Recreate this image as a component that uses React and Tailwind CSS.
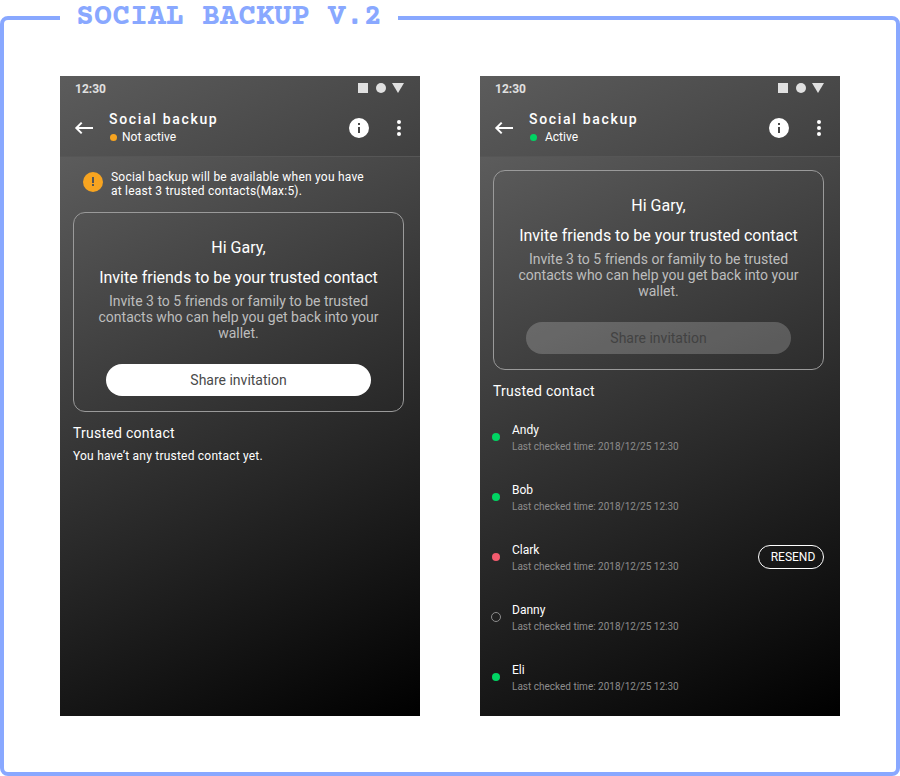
const TONES = {
  green: "bg-[#00d563]",
  red: "bg-[#f35b6e]",
  orange: "bg-[#f7a420]",
  none: "border border-[#8c8c8c]",
};

const CONTACTS = [
  { name: "Andy", tone: "green" },
  { name: "Bob", tone: "green" },
  { name: "Clark", tone: "red", resend: true },
  { name: "Danny", tone: "none" },
  { name: "Eli", tone: "green" },
];

function StatusBar() {
  return (
    <div className="flex h-6 items-center justify-between pr-4 pl-[15px] text-[#e0e0e0]">
      <span className="pt-0.5 text-xs font-bold">12:30</span>
      <svg width="46" height="10" viewBox="0 0 46 10" fill="currentColor" aria-hidden="true">
        <path d="M0 0h10v10H0z" />
        <circle cx="23" cy="5" r="5" />
        <path d="M34 0h12l-6 10z" />
      </svg>
    </div>
  );
}

function Header({ status, tone, gap }) {
  return (
    <header className="border-b border-[#565656] bg-[linear-gradient(155deg,#5c5c5c,#404040)]">
      <StatusBar />
      <div className="flex h-14 items-center pr-3 pl-3">
        <button type="button" aria-label="Back" className="flex size-6 items-center justify-center">
          <svg width="24" height="24" viewBox="0 0 24 24" fill="none" stroke="currentColor" strokeWidth="2" aria-hidden="true">
            <path d="M21 12H4.5M9.7 6.6 4.3 12l5.4 5.4" />
          </svg>
        </button>
        <div className="ml-[13px] flex-1">
          <h2 className="text-sm leading-[18px] font-medium tracking-[0.12em]">Social backup</h2>
          <p className={`flex items-center text-xs leading-[18px] ${gap}`}>
            <span className={`ml-px size-[7px] rounded-full ${TONES[tone]}`} />
            {status}
          </p>
        </div>
        <button type="button" aria-label="Information" className="mr-[19px] flex size-6 items-center justify-center">
          <svg width="24" height="24" viewBox="0 0 24 24" aria-hidden="true">
            <path
              fill="currentColor"
              fillRule="evenodd"
              d="M12 2a10 10 0 1 0 0 20 10 10 0 0 0 0-20zm1 15h-2v-6h2v6zm0-8h-2V7h2v2z"
            />
          </svg>
        </button>
        <button type="button" aria-label="More options" className="flex w-[18px] justify-center">
          <svg width="4" height="16" viewBox="0 0 4 16" fill="currentColor" aria-hidden="true">
            <circle cx="2" cy="2" r="2" />
            <circle cx="2" cy="8" r="2" />
            <circle cx="2" cy="14" r="2" />
          </svg>
        </button>
      </div>
    </header>
  );
}

function InviteCard({ disabled }) {
  return (
    <section className="rounded-xl border border-[#9a9a9a] px-5 pt-[23px] pb-[15px] text-center">
      <p className="leading-6">Hi Gary,</p>
      <h3 className="mt-1.5 leading-6">Invite friends to be your trusted contact</h3>
      <p className="mt-[3px] text-sm leading-4 text-[#bdbdbd]">
        Invite 3 to 5 friends or family to be trusted contacts who can help you get back into your wallet.
      </p>
      <div className="mt-[23px] px-3">
        <button
          type="button"
          disabled={disabled}
          className="h-8 w-full rounded-full bg-white text-sm text-[#4a4a4a] disabled:bg-white/20 disabled:text-[#424242]"
        >
          Share invitation
        </button>
      </div>
    </section>
  );
}

function Phone({ status, tone, gap, children }) {
  return (
    <article className="flex min-h-160 flex-col text-white">
      <Header status={status} tone={tone} gap={gap} />
      <div className="flex-1 bg-[linear-gradient(155deg,#5c5c5c,#000000)] pt-[13px] pr-4 pl-[13px]">{children}</div>
    </article>
  );
}

function Contact({ name, tone, resend }) {
  return (
    <li className="flex h-15 items-center">
      <span className="flex w-[19px]">
        <span className={tone === "none" ? `-ml-0.5 size-[10px] rounded-full ${TONES[tone]}` : `-ml-px size-2 rounded-full ${TONES[tone]}`} />
      </span>
      <div className="flex-1 pt-1">
        <p className="text-xs leading-4">{name}</p>
        <p className="text-[10px] leading-[18px] text-[#8c8c8c]">Last checked time: 2018/12/25 12:30</p>
      </div>
      {resend && (
        <button type="button" className="h-6 w-[66px] rounded-full border border-white pl-1 text-xs">
          RESEND
        </button>
      )}
    </li>
  );
}

export default function App() {
  return (
    <fieldset className="min-h-screen rounded-lg border-4 border-[#89a8ff] bg-white px-14 pb-14 font-['Roboto',sans-serif]">
      <legend className="px-4 py-0.5 font-['Courier_Prime','Courier_New','Liberation_Mono',monospace] text-[30px] leading-8 font-bold text-[#89a8ff]">
        SOCIAL BACKUP V.2
      </legend>
      <div className="grid grid-cols-2 gap-15 pt-10">
        <Phone status="Not active" tone="orange" gap="gap-[5px]">
          <div className="mb-3.5 flex items-start pl-2.5">
            <span className="mt-0.5 mr-2 flex size-5 items-center justify-center rounded-full bg-[#f7a420]">
              <svg width="4" height="10" viewBox="0 0 4 10" fill="#555555" aria-hidden="true">
                <path d="M1 0h2v6H1zM1 7h2v2H1z" />
              </svg>
            </span>
            <p className="text-xs leading-[14px] tracking-[0.018em]">
              Social backup will be available when you have
              <br />
              at least 3 trusted contacts(Max:5).
            </p>
          </div>
          <InviteCard />
          <h3 className="mt-3 text-sm leading-[18px] tracking-[0.018em]">Trusted contact</h3>
          <p className="mt-1 text-xs leading-5 tracking-[0.018em]">You have’t any trusted contact yet.</p>
        </Phone>
        <Phone status="Active" tone="green" gap="gap-2">
          <InviteCard disabled />
          <h3 className="mt-3 text-sm leading-[18px] tracking-[0.018em]">Trusted contact</h3>
          <ul className="mt-[7px]">
            {CONTACTS.map((contact) => (
              <Contact key={contact.name} {...contact} />
            ))}
          </ul>
        </Phone>
      </div>
    </fieldset>
  );
}
